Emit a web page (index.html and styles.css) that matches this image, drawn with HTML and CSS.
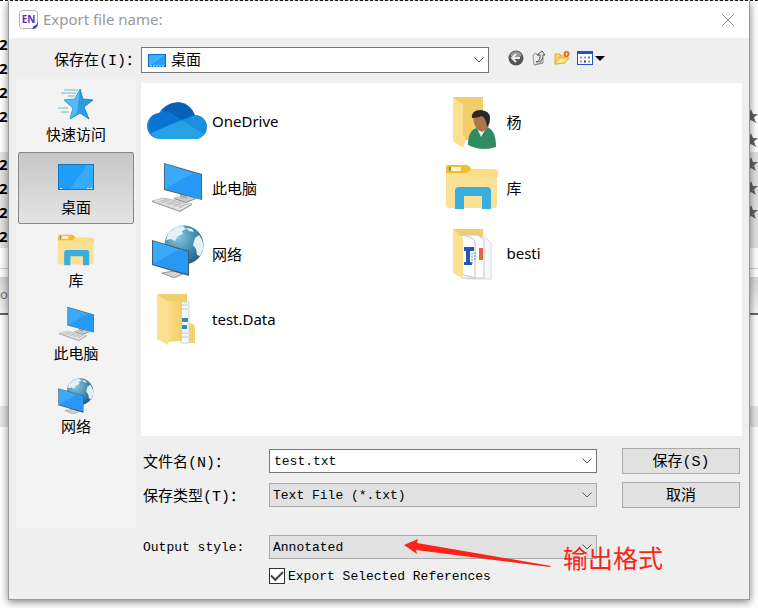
FILE: index.html
```html
<!DOCTYPE html>
<html lang="zh-CN">
  <head>
    <meta charset="UTF-8" />
    <meta name="viewport" content="width=device-width, initial-scale=1.0" />
    <title>Export file name:</title>
    <link rel="stylesheet" href="styles.css" />
  </head>
  <body>
    <!-- shared shapes -->
    <svg class="defs" aria-hidden="true">
      <defs>
        <linearGradient id="screen" x1="0" y1="0" x2="1" y2="1">
          <stop offset="0" stop-color="#3aa9f5" />
          <stop offset="0.5" stop-color="#45b4fc" />
          <stop offset="0.52" stop-color="#1f9dfb" />
          <stop offset="1" stop-color="#2ba4fc" />
        </linearGradient>
        <linearGradient id="folder" x1="0" y1="0" x2="1" y2="0">
          <stop offset="0" stop-color="#fbe08a" />
          <stop offset="1" stop-color="#f3cf68" />
        </linearGradient>
        <radialGradient id="globe" cx="0.35" cy="0.3" r="0.75">
          <stop offset="0" stop-color="#8cc4dd" />
          <stop offset="0.5" stop-color="#4a95b9" />
          <stop offset="1" stop-color="#1f5f86" />
        </radialGradient>
        <symbol id="pc" viewBox="0 0 52 50">
          <path d="M22 36l12-3 11 3-10 5z" fill="#c9cccf" />
          <path d="M29 31l7 2v4l-7-2z" fill="#a8adb2" />
          <path d="M23 36l12 4 10-4v1l-10 4-12-4z" fill="#888" />
          <path d="M13 1l38 11v26L13 28z" fill="#4d6478" />
          <path d="M14 2l36 11v24L14 27z" fill="#3aa9fa" />
          <path d="M14 27L42 11l8 2v24z" fill="#2799f5" />
          <path d="M1 39l11-3 29 6-12 7z" fill="#e8e9ea" stroke="#aaa" stroke-width="0.700" />
          <path d="M6 39l25 6M9 38l25 6M12 37l25 6M10 41l8-4M16 43l8-4M22 45l8-4M28 46l7-4" stroke="#b0b0b0" stroke-width="0.700" fill="none" />
          <path d="M1 39v1l28 10 12-7v-1l-12 7z" fill="#999" />
        </symbol>
        <symbol id="net" viewBox="0 0 52 53">
          <circle cx="32" cy="20" r="19.500" fill="url(#globe)" />
          <path d="M16 9c4-5 9-8 15-8l3 3-4 2 1 3-5 2-3 5-4-2-5 1zM43 13l4-3c4 5 5 10 4 15l-3 6-3-1-1-6-3-4zM34 3l6 1 2 3-5-1z" fill="#e4f1f5" />
          <path d="M24 43l5 2v5l-5-2z" fill="#a0a5a9" />
          <path d="M10 48l12-2 9 3-9 4z" fill="#d0d3d5" stroke="#777" stroke-width="0.700" />
          <path d="M0 15l37 11v25L0 40z" fill="#3f5c73" />
          <path d="M1 16l35 11v22L1 39z" fill="#3aa9fa" />
          <path d="M1 39L28 24l8 3v22z" fill="#2799f5" />
        </symbol>
        <symbol id="lib" viewBox="0 0 54 46">
          <path d="M2 10h50v31q0 3-3 3H4q-3 0-3-3V10z" fill="#fbe196" />
          <path d="M1 10V4q0-3 3-3h17q3 0 4 2l2 2h22q4 0 4 4v4H25l-3-3H1z" fill="#fbdc88" />
          <path d="M1 9V4q0-3 3-3h17q3 0 5 4-2 4-6 4z" fill="#f4bd2d" />
          <path d="M4 3h12v4H4z" fill="#fff3c4" />
          <path d="M4 3h2v4H4z" fill="#51a36a" />
          <path d="M10 45V27q0-4 4-4h28q4 0 4 4v18h-9V32H19v13z" fill="#37aede" />
        </symbol>
        <symbol id="clip-star" viewBox="0 0 14 14">
          <path d="M7 0l2 5 5 0-4 3.500 2 5.500-5-3-5 3 2-5.500L0 5h5z" fill="#666" />
        </symbol>
      </defs>
    </svg>

    <!-- reference list window behind the dialog -->
    <div class="backdrop" aria-hidden="true">
      <div class="refs">
        <div class="ref"><b>20</b></div>
        <div class="ref"><b>20</b></div>
        <div class="ref"><b>20</b></div>
        <div class="ref"><b>20</b><svg class="clip"><use href="#clip-star" /></svg></div>
        <div class="ref"><svg class="clip"><use href="#clip-star" /></svg></div>
        <div class="ref unread"><b>20</b><svg class="clip"><use href="#clip-star" /></svg></div>
        <div class="ref unread"><b>20</b><svg class="clip"><use href="#clip-star" /></svg></div>
        <div class="ref unread"><b>20</b><svg class="clip"><use href="#clip-star" /></svg></div>
        <div class="ref unread"><b>20</b></div>
      </div>
      <div class="status">of</div>
      <div class="preview"><div class="band"></div></div>
    </div>

    <div class="dialog" role="dialog" aria-labelledby="dialog-title">
      <div class="titlebar">
        <svg class="app-icon" viewBox="0 0 20 20">
          <rect x="0.500" y="0.500" width="18" height="18" rx="3" fill="#fff" stroke="#b5b1ba" />
          <text x="9.500" y="13" text-anchor="middle" class="app-letters">EN</text>
          <path d="M19 12q0 6-6 7 1-2 2-3 3-1 4-4z" fill="#43208e" />
        </svg>
        <h1 id="dialog-title">Export file name:</h1>
        <button class="close" type="button" aria-label="Close">
          <svg viewBox="0 0 14 14"><path d="M1 1l12 12M13 1L1 13" stroke="#888" fill="none" /></svg>
        </button>
      </div>

      <form class="content">
        <label class="lookin-label" for="lookin">保存在(I)：</label>
        <div class="toolbar">
          <div class="combo lookin">
            <svg class="combo-icon" viewBox="0 0 18 13"><rect width="18" height="13" fill="#0b6fc4" /><rect x="1" y="1" width="16" height="11" fill="url(#screen)" /><path d="M2 12h14" stroke="#d8efff" stroke-dasharray="2 1" /></svg>
            <select id="lookin"><option>桌面</option></select>
            <svg class="chevron" viewBox="0 0 10 6"><path d="M0.500 0.500L5 5l4.500-4.500" /></svg>
          </div>
          <div class="tools">
            <button type="button" aria-label="Back">
              <svg viewBox="0 0 16 16"><circle cx="8" cy="8" r="7.500" fill="#555" /><path d="M2 6a6.300 6.300 0 0 1 12 0q-6 3-12 0z" fill="#999" /><path d="M8 4L4 8l4 4M4.500 8H12" stroke="#eee" stroke-width="1.800" fill="none" /></svg>
            </button>
            <button type="button" aria-label="Up one level">
              <svg viewBox="0 0 16 16"><path d="M2 5l3-2 1 2h4v8l-7 2z" fill="#ececec" stroke="#999" /><path d="M4 15l8-2V8l-2-1" fill="none" stroke="#888" /><path d="M5 12c4-1 4-4 4-7H6l5-4 3 4h-2c0 4-1 7-7 7z" fill="#ddd" stroke="#555" /></svg>
            </button>
            <button type="button" aria-label="New folder">
              <svg viewBox="0 0 16 16"><path d="M1 14V4h5l1 2h6v2l-2 5z" fill="#f8d45a" stroke="#dba93a" /><path d="M1 14l4-6h10l-4 5z" fill="#ffe88c" stroke="#e0b048" /><circle cx="12.500" cy="4" r="3" fill="#ee5a24" /><path d="M12.500 2v4M10.500 4h4" stroke="#ffc78f" /></svg>
            </button>
            <button class="views" type="button" aria-label="View menu">
              <svg viewBox="0 0 16 16"><rect x="0.500" y="1.500" width="15" height="13" fill="#fff" stroke="#1d55c4" /><rect y="1" width="16" height="3" fill="#1d55c4" /><path d="M3 7.500h2M7 7.500h2M3 11.500h2M11 11.500h2" stroke="#9a9aa8" stroke-width="2" /><path d="M11 7.500h2" stroke="#3b9a50" stroke-width="2" /><path d="M7 11.500h2" stroke="#33338c" stroke-width="2" /></svg>
              <svg class="arrow" viewBox="0 0 10 5"><path d="M0 0h10L5 5z" /></svg>
            </button>
          </div>
        </div>

        <nav class="places">
          <button type="button">
            <svg viewBox="0 0 40 36">
              <path d="M24 3l3 10 10 1-9 7 5 12-9-6-10 6 3-11-9-8 11-1z" fill="#2d9ce5" stroke="#1677b9" stroke-width="0.800" />
              <path d="M24 3l-3 24-7 6 3-11-9-8 11-1z" fill="#54baf2" />
              <path d="M8 4h14M5 7h15M12 10h7M2 22h10M5 26h8" stroke="#72b5df" />
            </svg>
            快速访问
          </button>
          <button class="active" type="button">
            <svg viewBox="0 0 40 36"><rect x="2" y="5" width="36" height="26" fill="#1276c2" /><rect x="3" y="6" width="34" height="24" fill="#1e9dfa" /><path d="M14 30L31 6h6v24z" fill="#36abff" /><path d="M4 29.500h3M31 29.500h6" stroke="#e8f6ff" stroke-dasharray="2 1" /></svg>
            桌面
          </button>
          <button type="button"><svg viewBox="0 0 40 36"><use href="#lib" x="1" y="2" width="38" height="32" /></svg>库</button>
          <button type="button"><svg viewBox="0 0 40 36"><use href="#pc" x="2" y="1" width="37" height="35" /></svg>此电脑</button>
          <button type="button"><svg viewBox="0 0 40 36"><use href="#net" x="2" y="0" width="36" height="36" /></svg>网络</button>
        </nav>

        <div class="main">
          <ul class="files">
            <li>
              <svg viewBox="0 0 60 60">
                <path d="M14 48a13 13 0 0 1-2-26 20 20 0 0 1 36 2 12 12 0 0 1 0 24z" fill="#1b86dc" />
                <path d="M15 20a18 18 0 0 1 33 5l-13 5z" fill="#0a5fb8" />
                <path d="M13 22q6-3 13 1l9 6-31 13a13 13 0 0 1 9-20z" fill="#0874d6" />
                <path d="M4 42l31-13 22 14q-3 5-9 5H13q-6 0-9-6z" fill="#27a1e6" />
                <path d="M35 29l13-5a12 12 0 0 1 10 18z" fill="#1790df" />
              </svg>
              OneDrive
            </li>
            <li>
              <svg viewBox="0 0 60 60">
                <path d="M11 6h30v43H19z" fill="#f1cd6b" />
                <path d="M11 6l12 9v36l-2 6L11 50z" fill="#fbe08f" />
                <path d="M22 14v31" stroke="#e2b952" />
                <path d="M26 54q0-15 9-17l10-1q9 3 9 20-14 5-28-2z" fill="#2e8b62" />
                <path d="M35 37l4 9 6-10z" fill="#eaf2ee" />
                <path d="M31 26q0-6 8-6t9 7q0 12-8 14-8-2-9-15z" fill="#a9764e" />
                <path d="M30 27q-1-8 9-8 9 1 9 8 0 5-3 9-1-9-5-11-5 2-10 2z" fill="#2c2727" />
              </svg>
              杨
            </li>
            <li><svg viewBox="0 0 60 60"><use href="#pc" x="4" y="5" width="52" height="50" /></svg>此电脑</li>
            <li><svg viewBox="0 0 60 60"><use href="#lib" x="3" y="7" width="54" height="46" /></svg>库</li>
            <li><svg viewBox="0 0 60 60"><use href="#net" x="5" y="2" width="52" height="53" /></svg>网络</li>
            <li>
              <svg viewBox="0 0 60 60">
                <path d="M11 6h30v46H19z" fill="#f1cd6b" />
                <path d="M24 14h19l6 6v36H24z" fill="#f6f7f8" stroke="#d9d9d9" />
                <path d="M20 12h16l6 5v38H20z" fill="#fff" stroke="#c9c9c9" />
                <path d="M17 13q10-2 16 5v37l-14-4z" fill="#fff" stroke="#c2c2c2" />
                <path d="M22 24h10v4H22zM22 39h8v3h-8zM24 28h4v11h-4z" fill="#2157b8" />
                <path d="M30 30v12M33 29v9" stroke="#5d8fdb" stroke-dasharray="2 1" />
                <path d="M37 25h4v12h-4z" fill="#e2664e" />
                <path d="M11 6l10 9v41L11 50z" fill="#fbe08f" />
              </svg>
              besti
            </li>
            <li>
              <svg viewBox="0 0 60 60">
                <path d="M11 5h29v46H19z" fill="#f1cd6b" />
                <path d="M41 34q7 0 7 5v15H40z" fill="#f3d26f" />
                <path d="M34 13h8v41h-8z" fill="#f4f8fb" stroke="#ccd5da" />
                <path d="M35 16h6M35 20h6M35 44h6M35 48h6" stroke="#b7cbd9" />
                <path d="M35 29h6v4h-6zM35 36h5v4h-5z" fill="#3c87ad" />
                <path d="M20 12h15v40l-15 1z" fill="url(#folder)" />
                <path d="M10 5l12 9v37l-1 5-11-6z" fill="#fbe08f" />
              </svg>
              test.Data
            </li>
          </ul>

          <div class="fields">
            <label class="cjk" for="filename">文件名(N)：</label>
            <div class="combo">
              <input id="filename" type="text" value="test.txt" />
              <svg class="chevron" viewBox="0 0 10 6"><path d="M0.500 0.500L5 5l4.500-4.500" /></svg>
            </div>
            <button class="push" type="submit">保存(S)</button>

            <label class="cjk" for="filetype">保存类型(T)：</label>
            <div class="combo">
              <select id="filetype" class="flat"><option>Text File (*.txt)</option></select>
              <svg class="chevron" viewBox="0 0 10 6"><path d="M0.500 0.500L5 5l4.500-4.500" /></svg>
            </div>
            <button class="push" type="button">取消</button>
          </div>

          <div class="fields output">
            <label for="style">Output style:</label>
            <div class="combo">
              <select id="style" class="flat"><option>Annotated</option></select>
              <svg class="chevron" viewBox="0 0 10 6"><path d="M0.500 0.500L5 5l4.500-4.500" /></svg>
            </div>
            <label class="check"><input type="checkbox" checked />Export Selected References</label>
          </div>
        </div>
      </form>

      <!-- hand-drawn note over the output style box -->
      <svg class="note-arrow" viewBox="0 0 150 30"><path d="M1 6l14-6-1 4 134 23-1 1L13 11l1 4z" fill="#fb2416" /></svg>
      <span class="note">输出格式</span>
    </div>
  </body>
</html>
```
FILE: styles.css
```css
* {
  box-sizing: border-box;
}

body {
  margin: 0;
  min-height: 100vh;
  position: relative;
  background: #fff;
  color: #000;
  font-family: "Noto Sans", "Noto Sans CJK SC", sans-serif;
  font-size: 15px;
}

button,
input,
select {
  font: inherit;
  color: inherit;
  margin: 0;
}

.defs {
  position: absolute;
  width: 0;
  height: 0;
}

/* window behind */
.backdrop {
  position: absolute;
  inset: 0;
  overflow: hidden;
  display: flex;
  flex-direction: column;
  border-top: 1px dashed #222;
}

.refs {
  padding-top: 31px;
  height: 268px;
  border-bottom: 1px solid #ccc;
}

.ref {
  display: flex;
  align-items: center;
  height: 24px;
}

.ref b {
  margin-left: -1px;
  font-family: "Open Sans", sans-serif;
}

.unread {
  background: #e2e2e2;
}

.clip {
  width: 14px;
  height: 14px;
  margin-left: auto;
}

.status {
  height: 46px;
  padding-top: 15px;
  border-bottom: 2px solid #666;
  background: linear-gradient(#fff 8px, #d6d6d6 8px, #f4f4f4);
  color: #777;
  font-size: 13px;
  line-height: 20px;
}

.preview {
  flex: 1;
  padding-top: 91px;
}

.band {
  height: 21px;
  background: #e6e6e6;
}

/* dialog */
.dialog {
  position: relative;
  margin: 0 8px;
  top: 1px;
  border: 1px solid #999;
  border-top: 0;
  background: #efefef;
  box-shadow: 0 2px 8px rgba(0, 0, 0, 0.5);
}

.titlebar {
  display: flex;
  align-items: center;
  height: 37px;
  padding: 0 14px 0 10px;
  background: #fff;
}

.app-icon {
  width: 20px;
  height: 20px;
}

.app-letters {
  font: bold 10px "Open Sans", sans-serif;
  fill: #5b2fc0;
}

.titlebar h1 {
  flex: 1;
  margin: 0 0 0 4px;
  font-size: 15px;
  font-weight: 400;
  line-height: 20px;
  padding-bottom: 2px;
  color: #999;
}

.close {
  display: flex;
  padding: 0;
  border: 0;
  background: none;
}

.close svg {
  width: 14px;
  height: 14px;
}

.content {
  display: grid;
  grid-template-columns: 120px 1fr;
  column-gap: 5px;
  padding: 0 7px 10px;
}

.lookin-label {
  align-self: center;
  padding: 0 0 4px 38px;
  white-space: nowrap;
}

.lookin-label,
.cjk,
.push {
  font-family: "Liberation Mono", "Noto Sans CJK SC", monospace;
  font-size: 15px;
}

.toolbar {
  display: flex;
  align-items: center;
  gap: 19px;
  height: 45px;
  padding-bottom: 2px;
}

.combo {
  position: relative;
}

.combo input,
.combo select {
  display: block;
  width: 100%;
  height: 24px;
  padding: 0 24px 0 4px;
  border: 1px solid #777;
  border-radius: 0;
  background: #fff;
  appearance: none;
}

.combo .flat {
  padding-left: 3px;
  border-color: #aaa;
  background: #e1e1e1;
}

.chevron {
  position: absolute;
  right: 5px;
  top: 50%;
  width: 10px;
  height: 6px;
  margin-top: -3px;
  pointer-events: none;
}

.chevron path {
  fill: none;
  stroke: #555;
}

.lookin {
  flex: 0 1 348px;
}

.combo.lookin select {
  height: 26px;
  padding: 0 24px 2px 29px;
}

.combo-icon {
  position: absolute;
  left: 7px;
  top: 7px;
  width: 18px;
  height: 13px;
}

.tools {
  display: flex;
  gap: 7px;
  padding-bottom: 3px;
}

.tools button {
  display: flex;
  align-items: center;
  padding: 0;
  border: 0;
  background: none;
}

.tools svg {
  width: 16px;
  height: 16px;
}

.tools .arrow {
  width: 10px;
  height: 5px;
  margin-left: 2px;
}

/* places bar */
.places {
  display: flex;
  flex-direction: column;
  gap: 1px;
  align-self: start;
  min-height: 449px;
  padding: 0 2px;
  margin-top: -4px;
  background: #f3f3f3;
}

.places button {
  display: flex;
  flex-direction: column;
  align-items: center;
  justify-content: flex-end;
  gap: 2px;
  width: 100%;
  height: 72px;
  padding: 0 0 6px;
  border: 1px solid transparent;
  background: none;
  line-height: 20px;
}

.places svg {
  width: 40px;
  height: 36px;
}

.places .active {
  border-color: #888;
  border-radius: 2px;
  background: linear-gradient(#c6c6c6, #e4e4e4);
}

/* file list */
.files {
  display: grid;
  grid-template-columns: repeat(2, 1fr);
  grid-auto-rows: 66px;
  align-content: start;
  min-height: 353px;
  margin: 0;
  padding: 5px 6px;
  background: #fff;
  list-style: none;
}

.files li {
  display: flex;
  align-items: center;
  gap: 5px;
}

.files svg {
  width: 60px;
  height: 60px;
}

/* fields under the list */
.fields {
  display: grid;
  grid-template-columns: 126px 1fr 118px;
  align-items: center;
  gap: 8px 0;
  padding: 12px 2px 0;
  grid-auto-rows: 26px;
  font-family: "Liberation Mono", "Noto Sans CJK SC", monospace;
  font-size: 13px;
  white-space: nowrap;
}

.fields .combo {
  margin-right: 25px;
}

.push {
  height: 26px;
  padding: 0 0 2px;
  border: 1px solid #aaa;
  background: #e1e1e1;
}

.output {
  padding-top: 26px;
  row-gap: 3px;
}

.check {
  grid-column: 2;
  grid-row: 2;
  display: flex;
  align-items: center;
  gap: 3px;
}

.check input {
  appearance: none;
  width: 16px;
  height: 16px;
  border: 1px solid #333;
  background: #fff;
  display: grid;
  place-items: center;
}

.check input:checked::before {
  content: "";
  width: 10px;
  height: 5px;
  margin-bottom: 3px;
  border: solid #444;
  border-width: 0 0 2px 2px;
  transform: rotate(-45deg);
}

/* note */
.note-arrow {
  position: absolute;
  right: 196px;
  bottom: 30px;
  width: 150px;
  height: 30px;
  pointer-events: none;
}

.note {
  position: absolute;
  right: 86px;
  bottom: 25px;
  color: #fb2416;
  font-size: 25px;
  line-height: 32px;
  pointer-events: none;
}
```
